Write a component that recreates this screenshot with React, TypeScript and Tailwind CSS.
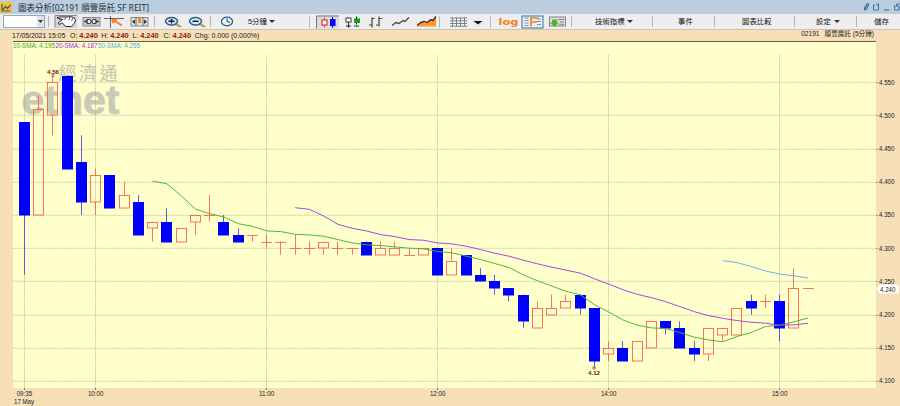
import React from 'react';

// open, close, high, low
const candles = [
  [4.49, 4.35, 4.49, 4.26],
  [4.35, 4.51, 4.53, 4.35],
  [4.5, 4.55, 4.56, 4.47],
  [4.56, 4.42, 4.56, 4.42],
  [4.43, 4.37, 4.47, 4.35],
  [4.37, 4.41, 4.42, 4.35],
  [4.41, 4.36, 4.41, 4.36],
  [4.36, 4.38, 4.4, 4.36],
  [4.37, 4.32, 4.38, 4.32],
  [4.33, 4.34, 4.34, 4.31],
  [4.34, 4.31, 4.36, 4.31],
  [4.31, 4.33, 4.33, 4.31],
  [4.34, 4.35, 4.35, 4.32],
  [4.35, 4.35, 4.38, 4.34],
  [4.34, 4.32, 4.35, 4.32],
  [4.32, 4.31, 4.33, 4.31],
  [4.32, 4.32, 4.32, 4.31],
  [4.31, 4.31, 4.32, 4.3],
  [4.31, 4.31, 4.31, 4.29],
  [4.3, 4.3, 4.32, 4.29],
  [4.3, 4.3, 4.31, 4.29],
  [4.3, 4.31, 4.31, 4.29],
  [4.3, 4.3, 4.31, 4.29],
  [4.3, 4.3, 4.3, 4.29],
  [4.31, 4.29, 4.31, 4.29],
  [4.29, 4.3, 4.31, 4.29],
  [4.29, 4.3, 4.31, 4.29],
  [4.29, 4.29, 4.3, 4.29],
  [4.29, 4.3, 4.3, 4.29],
  [4.3, 4.26, 4.3, 4.26],
  [4.26, 4.28, 4.3, 4.26],
  [4.29, 4.26, 4.29, 4.26],
  [4.26, 4.25, 4.27, 4.25],
  [4.25, 4.24, 4.26, 4.23],
  [4.24, 4.23, 4.24, 4.22],
  [4.23, 4.19, 4.23, 4.18],
  [4.18, 4.21, 4.22, 4.18],
  [4.2, 4.21, 4.23, 4.2],
  [4.21, 4.22, 4.23, 4.21],
  [4.23, 4.21, 4.23, 4.2],
  [4.21, 4.13, 4.21, 4.12],
  [4.14, 4.15, 4.16, 4.13],
  [4.15, 4.13, 4.16, 4.13],
  [4.13, 4.16, 4.16, 4.13],
  [4.15, 4.19, 4.19, 4.15],
  [4.19, 4.18, 4.19, 4.17],
  [4.18, 4.15, 4.19, 4.15],
  [4.15, 4.14, 4.16, 4.13],
  [4.14, 4.18, 4.18, 4.13],
  [4.17, 4.18, 4.18, 4.16],
  [4.17, 4.21, 4.21, 4.17],
  [4.22, 4.21, 4.23, 4.2],
  [4.22, 4.22, 4.23, 4.21],
  [4.22, 4.18, 4.23, 4.16],
  [4.18, 4.24, 4.27, 4.18],
  [4.24, 4.24, 4.24, 4.24],
];

const prices = [4.55, 4.5, 4.45, 4.4, 4.35, 4.3, 4.25, 4.2, 4.15, 4.1];
const times: [number, string][] = [[0, '09:35'], [5, '10:00'], [17, '11:00'], [29, '12:00'], [41, '14:00'], [53, '15:00']];
const averages: [number, string][] = [[10, '#45b52f'], [20, '#a63be0'], [50, '#5fb0e6']];

// plot area is 863 x 347
const px = (i: number) => 11.4 + i * 14.25;
const py = (p: number) => 207.2 - (p - 4.3) * 664;

const smaPoints = (n: number) =>
  candles
    .map((_, i) => {
      if (i < n - 1) return '';
      const sum = candles.slice(i - n + 1, i + 1).reduce((t, c) => t + c[1], 0);
      return `${px(i)},${py(sum / n)}`;
    })
    .filter(Boolean)
    .join(' ');

const Sep = () => <div className="h-[11px] w-px shrink-0 bg-[#b4b4b4]" />;
const Caret = () => <svg width="6" height="3" className="shrink-0"><path d="M0 0h6L3 3z" fill="#333" /></svg>;

function Candle({ c, i }: { c: number[]; i: number }) {
  const [open, close, high, low] = c;
  const x = Math.round(px(i) - 0.5) + 0.5;
  const top = Math.round(py(Math.max(open, close)));
  const bot = Math.round(py(Math.min(open, close)));
  if (close < open) {
    return (
      <g>
        <path d={`M${x} ${py(high)}V${py(low)}`} stroke="#4a4ae0" strokeWidth="0.9" />
        <rect x={x - 5.5} y={top} width="11" height={bot - top + 0.5} fill="#0000ff" />
      </g>
    );
  }
  return (
    <g fill="none" stroke="#ff5a46" strokeWidth="0.85">
      <path d={`M${x} ${py(high)}V${top}M${x} ${bot}V${py(low)}`} />
      {top === bot ? <path d={`M${x - 5.5} ${top + 0.5}h11`} /> : <rect x={x - 5} y={top + 0.5} width="10" height={bot - top - 0.5} />}
    </g>
  );
}

function Chart() {
  return (
    <svg width="887" height="365" className="shrink-0 overflow-visible font-['Liberation_Sans',sans-serif]">
      <g fill="#c9cbb4">
        <text x="45.5" y="38.5" fontSize="18" fontWeight="500" textLength="59" className="font-['Noto_Sans_CJK_TC',sans-serif]">經濟通</text>
        <text x="8.5" y="73" fontSize="40" fontWeight="700" textLength="98" lengthAdjust="spacingAndGlyphs" stroke="#c9cbb4" strokeWidth="0.8">etnet</text>
      </g>
      <g stroke="#8d9b82" strokeOpacity="0.65" strokeWidth="0.7">
        {prices.map((p) => <path key={p} d={`M0 ${Math.round(py(p)) + 0.3}H863`} strokeDasharray="1.6 .6" />)}
        {times.map(([i]) => <path key={i} d={`M${Math.round(px(i) - 0.5) + 0.5} 14V347`} strokeDasharray="1.6 .6" />)}
      </g>
      {candles.map((c, i) => <Candle key={i} c={c} i={i} />)}
      {averages.map(([n, color]) => <polyline key={n} points={smaPoints(n)} fill="none" stroke={color} strokeWidth="0.95" />)}

      <g fontSize="6.2" fontWeight="700" fill="#701010" textAnchor="middle">
        <text x="40" y="32.5">4.56</text>
        <text x="581" y="333.5">4.12</text>
        <g fill="none" stroke="#803030" strokeWidth="0.7">
          <circle cx="40" cy="34.5" r="1.3" />
          <circle cx="581" cy="327" r="1.3" />
        </g>
      </g>

      <g fontSize="7" fill="#222">
        {prices.map((p) => (
          <React.Fragment key={p}>
            <path d={`M863 ${Math.round(py(p)) + 0.5}h2`} stroke="#666" strokeWidth="0.6" />
            <text x="866" y={py(p) + 2.3} textLength="15.5" lengthAdjust="spacingAndGlyphs">{p.toFixed(3)}</text>
          </React.Fragment>
        ))}
        <path d="M863.500 248l3-4.500h17q2.500 0 2.500 2v5q0 2-2.500 2h-17z" fill="#fff" />
        <text x="867" y="250.500" textLength="15.5" lengthAdjust="spacingAndGlyphs">4.240</text>
        {times.map(([i, t]) => (
          <React.Fragment key={t}>
            <path d={`M${Math.round(px(i) - 0.5) + 0.5} 347v2`} stroke="#555" strokeWidth="0.7" />
            <text x={px(i)} y="355.300" textAnchor="middle" textLength="15.5" lengthAdjust="spacingAndGlyphs">{t}</text>
          </React.Fragment>
        ))}
        <text x="1" y="363.200" textLength="20" lengthAdjust="spacingAndGlyphs">17 May</text>
      </g>
    </svg>
  );
}

function Magnifier({ plus }: { plus?: boolean }) {
  return (
    <svg width="18" height="12" viewBox="0 0 18 12" className="shrink-0">
      <path d="M11.500 8l5 2.500" stroke="#c99a52" strokeWidth="2" strokeLinecap="round" />
      <ellipse cx="7.500" cy="5.300" rx="6" ry="3.700" fill="#d8eaf7" stroke="#2a5f94" strokeWidth="1.500" />
      <path d={plus ? 'M4.500 5.300h6M7.500 3v4.600' : 'M4.500 5.300h6'} stroke="#111" strokeWidth="1.400" />
    </svg>
  );
}

function TitleBar() {
  return (
    <div className="flex h-[14px] items-center bg-[#bccede]">
      <svg width="12" height="12" viewBox="0 0 12 12" className="shrink-0">
        <rect y="1" width="12" height="11" rx="1.500" fill="#fbc02c" />
        <path d="M2 3v7h8.500M3 8.500l2.500-3 2 2L10.500 4" stroke="#365d78" strokeWidth="1.200" fill="none" />
      </svg>
      <svg width="140" height="14" className="ml-[6px] overflow-visible font-['Noto_Sans','Noto_Sans_CJK_TC',sans-serif]">
        <text x="0" y="11" fontSize="8.800" fill="#25313b" textLength="131" lengthAdjust="spacingAndGlyphs">圖表分析[02191 順豐房託 SF REIT]</text>
      </svg>
      <svg width="38" height="10" viewBox="0 0 38 10" fill="none" stroke="#336c9e" className="ml-auto shrink-0">
        <path d="M2 7l3-5q2-1 1.500 1L4.500 7q-2 2-2 0l2-3.500" strokeWidth="1.100" />
        <path d="M13 3h-1.500v5h5V3M14 2l2 1.500M16.500 1.500v3" strokeWidth="0.900" />
        <path d="M22 8h5.500" />
        <path d="M34.500 4V2H39v4h-2M32.500 4h4.500v4h-4.500z" strokeWidth="0.900" />
      </svg>
    </div>
  );
}

function Toolbar() {
  return (
    <div className="flex h-[16px] items-center border-b border-[#c9c4bb] bg-[#eeeeee] text-[7.4px] whitespace-nowrap text-[#111]">
      <div className="ml-[3px] flex h-[13px] w-[42px] shrink-0 items-center justify-end border border-[#93a9ba] bg-white">
        <div className="flex h-full w-[7px] items-center justify-center bg-[#dce5ec]">
          <svg width="5" height="3"><path d="M0 0h5L2.500 3z" fill="#223f55" /></svg>
        </div>
      </div>
      <svg width="104" height="13" viewBox="47 15 104 13" className="ml-[2px] shrink-0" fill="none">
        <path d="M48.500 16v11" stroke="#b4b4b4" />
        <rect x="55" y="15" width="22" height="13" fill="#d5d5d5" />
        <path d="M55 27.500V15.500h22" stroke="#888" />
        <path d="M57 17.500q4-1 8-.5l6-.3q4 .5 4.500 3.300l-1 3-3 3.500h-6l-3-3.500-3.500 1.500-1-1.500 4-3z" fill="#fff" stroke="#333" />
        <path d="M57.500 18.500l6 1M66 17l-1.500 3M70 17l-1 3M73 18l-1.500 3" stroke="#333" strokeWidth="0.800" />
        <rect x="83" y="17.500" width="17" height="8.500" fill="#ccc" stroke="#777" strokeWidth="0.800" />
        <path d="M84 21.500h15M88 19l-3 2.500 3 2.500M95 19l3 2.500-3 2.500" stroke="#333" strokeWidth="0.900" />
        <ellipse cx="89" cy="21.500" rx="2" ry="2.300" fill="#eee" stroke="#333" />
        <ellipse cx="94" cy="21.500" rx="2" ry="2.300" fill="#eee" stroke="#333" />
        <path d="M104 18.500h20M110.500 16v12" stroke="#555" strokeWidth="0.900" />
        <path d="M122 25.500l-8-5M117 19.500l-4.500.3 1 3.500" stroke="#f47920" strokeWidth="1.900" />
        <rect x="131" y="17.500" width="17" height="8.500" fill="#ddd" stroke="#777" strokeWidth="0.800" />
        <path d="M136 17v9M143 17v9" stroke="#666" strokeWidth="0.900" />
        <path d="M132 21.700l3-2.200v4.500zM147 21.700l-3-2.200v4.500z" fill="#333" />
        <path d="M139.500 17v6" stroke="#f47920" strokeWidth="2.500" />
      </svg>
      <div className="ml-[3px]"><Sep /></div>
      <div className="ml-[9px] flex gap-[6px]"><Magnifier plus /><Magnifier /></div>
      <div className="ml-[4px]"><Sep /></div>
      <svg width="14" height="11" viewBox="0 0 14 11" className="ml-[9px] shrink-0">
        <ellipse cx="7" cy="5.500" rx="5.600" ry="4.300" fill="#eaf4fb" stroke="#2d6496" strokeWidth="1.300" />
        <path d="M7 2.500v3l3 1" stroke="#222" strokeWidth="0.900" fill="none" />
      </svg>
      <p className="ml-[14px] w-[18px]">5分鐘</p>
      <div className="ml-[3px]"><Caret /></div>

      <svg width="250" height="14" viewBox="308 14.500 250 14" className="ml-[32px] shrink-0" fill="none">
        <path d="M310.500 16v11M440.500 16v11M491.500 16v11" stroke="#b4b4b4" />
        <rect x="317" y="15" width="23" height="13" fill="#dcdcdc" />
        <path d="M317.500 28V15.500H340" stroke="#777" />
        <path d="M325.500 17v2M325.500 25v2" stroke="#e33" />
        <rect x="323" y="19.500" width="5" height="5" fill="#fff" stroke="#e33" strokeWidth="1.200" />
        <path d="M333.500 16.500v11" stroke="#00f" /><rect x="331" y="18.500" width="5.500" height="7" fill="#00f" />
        <path d="M349.500 17v10M347 25.500h5" stroke="#222" /><rect x="347" y="17.500" width="5" height="4" fill="#fff" stroke="#533" />
        <path d="M357.500 16v8M355 25.500h5" stroke="#222" /><rect x="355" y="18" width="6" height="4.500" fill="#14a014" />
        <path d="M370 24.500h3V17M373 18h2.500M373 24v3M377 24.500h3V16M380 18h3M380 24v2" stroke="#4b3d36" strokeWidth="1.200" />
        <path d="M393 25l4-3 3 1 4-3 2 1 4-4" stroke="#5b4740" strokeWidth="1.400" />
        <path d="M418 26l3-3 3-1 3 1 4-4 2 1 4-4v10z" fill="#ff962d" />
        <path d="M418 25l4-3 3-1 3 1 4-3 2 1 3-4" stroke="#542b1c" strokeWidth="1.400" />
        <rect x="452" y="17.500" width="15" height="8" fill="#f6f6f6" />
        <path d="M451 17.500h17M451 20.300h17M451 23h17M451 25.700h17M453.500 17v9M457.500 17v9M461.500 17v9M465.500 17v9" stroke="#65717b" strokeWidth="0.850" />
        <path d="M474.500 20.500h9l-4.500 3.500z" fill="#111" />
        <text x="499.500" y="24.700" fontSize="9" fontWeight="700" fill="#f58220" textLength="20" lengthAdjust="spacingAndGlyphs" className="font-['DejaVu_Sans',sans-serif]">log</text>
        <rect x="523" y="15.500" width="21" height="12" fill="#e5f0f9" stroke="#3070a8" />
        <path d="M525.500 17.500h4M525.500 20h4M525.500 22.500h4M525.500 25h4M538 18.500h4M538 21h4M538 24h4" stroke="#7b8790" strokeWidth="0.900" />
        <path d="M532 26v-8.500h7.500M532 21.500h6" stroke="#f58220" strokeWidth="1.700" />
      </svg>
      <svg width="18" height="13" viewBox="549 15 18 13" className="-ml-[9px] shrink-0" fill="none">
        <rect x="550.500" y="17" width="16" height="9" fill="#dedede" stroke="#858585" />
        <path d="M559 19.500h6M561 22h4M560 24.300h5" stroke="#777" strokeWidth="0.900" />
        <path d="M553 19.500h5v3h2l-4.500 4.500-4.500-4.500h2z" fill="#52b234" />
      </svg>
      <div className="ml-[5px]"><Sep /></div>
      <p className="ml-[23px] w-[29px]">技術指標</p>
      <div className="ml-[3px]"><Caret /></div>
      <div className="ml-[19px]"><Sep /></div>
      <p className="ml-[25px] w-[15px]">事件</p>
      <div className="ml-[21px]"><Sep /></div>
      <p className="ml-[27px] w-[29px]">圖表比較</p>
      <div className="ml-[23px]"><Sep /></div>
      <p className="ml-[21px] w-[15px]">設定</p>
      <div className="ml-[3px]"><Caret /></div>
      <div className="ml-[16px]"><Sep /></div>
      <p className="ml-[17px] w-[15px]">儲存</p>
    </div>
  );
}

const quotes = ['O:', 'H:', 'L:', 'C:'];

export default function App() {
  return (
    <div className="h-[406px] w-[900px] overflow-hidden bg-[#f7dfb8] font-['Liberation_Sans','Noto_Sans_CJK_TC',sans-serif]">
      <TitleBar />
      <Toolbar />
      <div className="flex h-[11px] items-center pr-[26px] pl-[12px] text-[7px] leading-none whitespace-nowrap text-[#222]">
        <p className="w-[58px] tracking-[-0.08px]">17/05/2021 15:05</p>
        {quotes.map((q) => (
          <p key={q} className="w-[31.200px]">{q} <b className="text-[7.4px] text-[#8b1a0e]">4.240</b></p>
        ))}
        <p>Chg: 0.000 (0.000%)</p>
        <p className="ml-auto -mt-[2px] text-[6.600px]"><span className="mr-[5px]">02191</span>順豐房託 (5分鐘)</p>
      </div>
      <div className="flex pl-[13px]">
        <div className="relative h-[347px] w-[863px] shrink-0 border-t border-[#655a48] bg-[#ffffcc]">
          <div className="absolute top-0 left-0 flex h-[8px] gap-[1.500px] text-[6.300px] leading-[8px] whitespace-nowrap">
            <p className="w-[41px] text-[#3fa62c]">10-SMA: 4.195</p>
            <p className="w-[41px] text-[#a32ddd]">20-SMA: 4.187</p>
            <p className="w-[41px] text-[#57a9dd]">50-SMA: 4.255</p>
          </div>
          <div className="-mt-px"><Chart /></div>
        </div>
      </div>
    </div>
  );
}
